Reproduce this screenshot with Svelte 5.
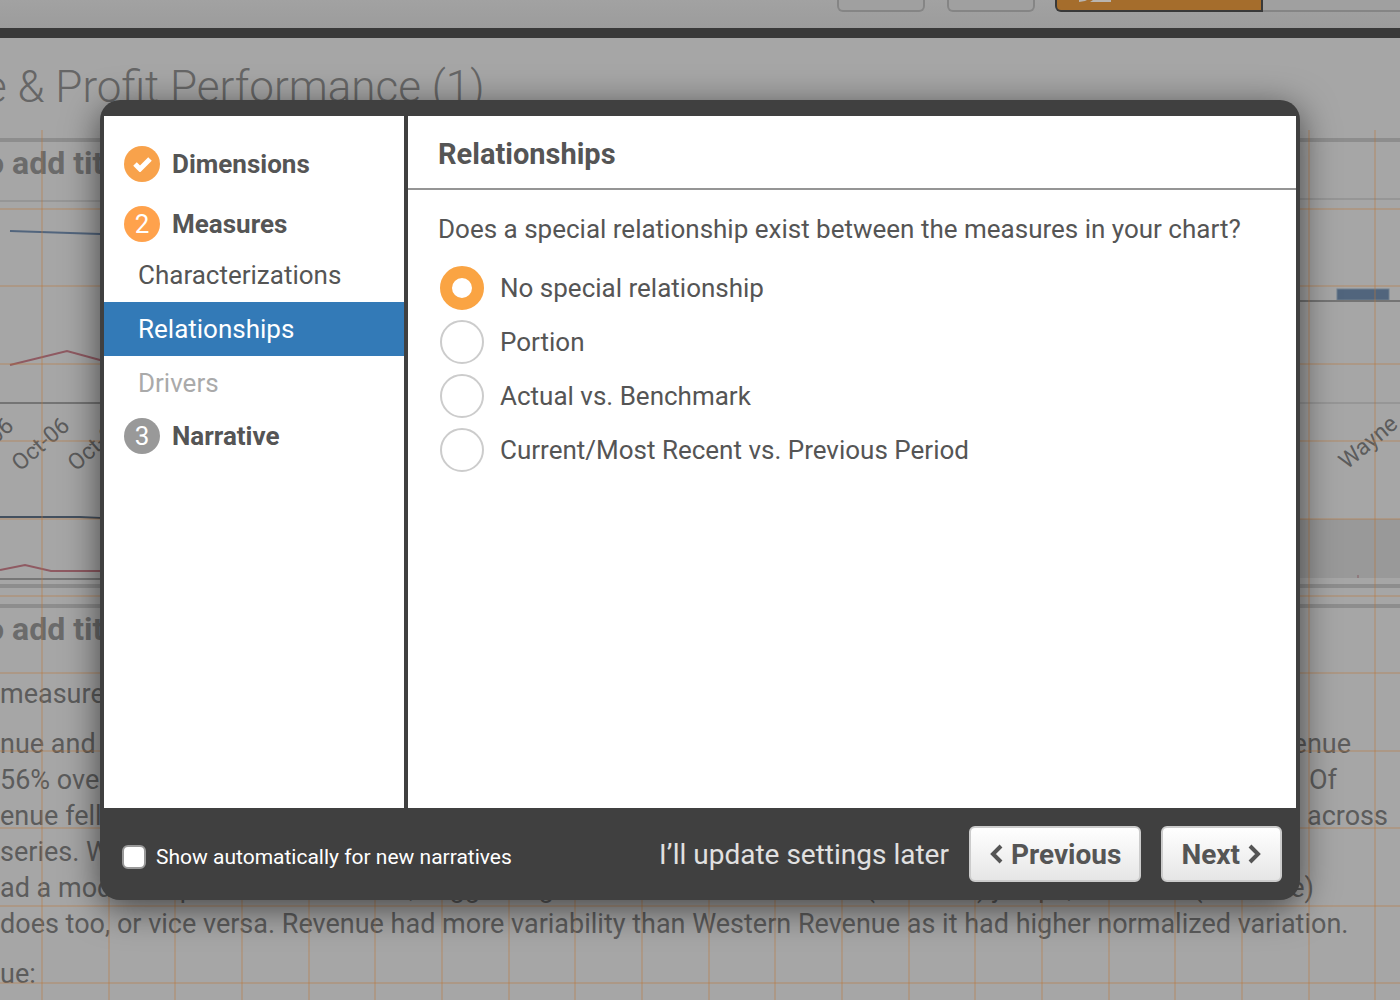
<script>
  const columns = Array.from({ length: 40 }, (_, i) => Math.round(41 + (i * 200) / 3));
  const rows = Array.from({ length: 24 }, (_, i) => Math.round(78 + (i * 387) / 5));

  const subSteps = [
    { name: 'Characterizations', state: '' },
    { name: 'Relationships', state: 'active' },
    { name: 'Drivers', state: 'disabled' }
  ];
  const options = [
    'No special relationship',
    'Portion',
    'Actual vs. Benchmark',
    'Current/Most Recent vs. Previous Period'
  ];
  let selected = $state('No special relationship');
  let showAuto = $state(false);
</script>

<div class="page">
  <header class="toolbar">
    <button class="tool" aria-label="Undo"></button>
    <button class="tool" aria-label="Redo"></button>
    <div class="modes">
      <button class="mode on" aria-label="Edit">
        <svg width="36" height="4" viewBox="0 0 36 4" aria-hidden="true">
          <path d="M2 0H10L8 1L2 2ZM16 0H34V2H13Z" fill="#b9b5b0" />
        </svg>
      </button>
      <button class="mode" aria-label="Sheets"></button>
    </div>
  </header>

  <main class="sheet">
    <h1>e &amp; Profit Performance (1)</h1>

    <section class="panel charts">
      <h2>o add title</h2>
      <div class="plots">
        <svg width="140" height="384" viewBox="0 0 140 384" aria-hidden="true">
          <g fill="none" stroke-width="2">
            <path d="M0 1H140" stroke="#969696" />
            <path d="M10 31L100 34L140 36" stroke="#52657d" />
            <path d="M10 165L67 151L100 160L140 170" stroke="#8f5a62" />
            <path d="M0 203H140" stroke="#747474" />
            <path d="M0 317H80L140 320" stroke="#43505f" />
            <path d="M0 370L25 365L51 371H140" stroke="#8f5a62" />
            <path d="M0 379H140" stroke="#777" />
          </g>
          <g class="ticks">
            <text transform="translate(-36 272) rotate(-41)">Oct-06</text>
            <text transform="translate(20 272) rotate(-41)">Oct-06</text>
            <text transform="translate(76 272) rotate(-41)">Oct-06</text>
          </g>
        </svg>
        <svg width="140" height="384" viewBox="0 0 140 384" aria-hidden="true">
          <rect x="0" y="319" width="140" height="59" fill="#999" />
          <rect x="77" y="89" width="52" height="11" fill="#51657d" stroke="#71808f" />
          <g fill="none" stroke-width="2">
            <path d="M0 -1H140" stroke="#969696" />
            <path d="M0 101H140" stroke="#747474" />
            <path d="M0 203H140" stroke="#969696" />
            <path d="M98 375V378" stroke="#8f7b7e" />
          </g>
          <g class="ticks">
            <text transform="translate(87 270) rotate(-40)">Wayne</text>
          </g>
        </svg>
      </div>
    </section>

    <section class="panel story">
      <h2>o add title</h2>
      <div class="lines">
        <p>measures</p>
        <div class="para">
          <p><span>nue and</span><span class="r1">enue</span></p>
          <p><span>56% over</span><span class="r2">Of</span></p>
          <p><span>enue fell</span><span class="r3">t across</span></p>
          <p><span>series. We</span></p>
          <p class="in"><span>ad a moderate positive correlation, suggesting that</span><span class="r5">if one (Revenue) jumps, the other (Revenue)</span></p>
          <p>does too, or vice versa. Revenue had more variability than Western Revenue as it had higher normalized variation.</p>
        </div>
        <p>ue:</p>
      </div>
    </section>
  </main>

  <svg class="grid" width="100%" height="100%" aria-hidden="true">
    {#each columns as x}
      <rect {x} y="0" width="2" height="100%" />
    {/each}
    {#each rows as y}
      <rect x="0" {y} width="100%" height="2" />
    {/each}
  </svg>
</div>

<div class="overlay">
  <div class="modal" role="dialog" aria-modal="true" aria-labelledby="dialog-title">
    <div class="body">
      <nav>
        <div class="step">
          <span class="badge">
            <svg width="20" height="16" viewBox="0 0 20 16" aria-hidden="true">
              <path d="M3 8L8 13L18 3" fill="none" stroke="#fff" stroke-width="5" />
            </svg>
          </span>
          <span>Dimensions</span>
        </div>
        <div class="step second"><span class="badge bright">2</span><span>Measures</span></div>
        <div class="subs">
          {#each subSteps as step}
            <button class="sub {step.state}" disabled={step.state === 'disabled'}>{step.name}</button>
          {/each}
        </div>
        <div class="step"><span class="badge grey">3</span><span>Narrative</span></div>
      </nav>
      <section class="content">
        <h3 id="dialog-title">Relationships</h3>
        <fieldset>
          <legend>Does a special relationship exist between the measures in your chart?</legend>
          {#each options as option}
            <label class="option">
              <input type="radio" name="relationship" value={option} bind:group={selected} />
              <span>{option}</span>
            </label>
          {/each}
        </fieldset>
      </section>
    </div>
    <footer>
      <label class="auto">
        <input type="checkbox" bind:checked={showAuto} />
        <span>Show automatically for new narratives</span>
      </label>
      <a href="#later">I’ll update settings later</a>
      <button class="nav">
        <svg width="14" height="22" viewBox="0 0 14 22" aria-hidden="true">
          <path d="M12 3L4 11L12 19" fill="none" stroke="#555" stroke-width="4" />
        </svg>
        Previous
      </button>
      <button class="nav">
        Next
        <svg width="14" height="22" viewBox="0 0 14 22" aria-hidden="true">
          <path d="M2 3L10 11L2 19" fill="none" stroke="#555" stroke-width="4" />
        </svg>
      </button>
    </footer>
  </div>
</div>

<style>
  :global(body) { background: #a6a6a6; }
  .page, .overlay { font-family: Roboto, "Liberation Sans", sans-serif; font-size: 26px; box-sizing: border-box; }
  h1, h2, h3, p { margin: 0; }
  button { font: inherit; cursor: pointer; }

  .page { position: relative; height: 100vh; min-height: 1000px; overflow: hidden; background: #a6a6a6; color: #5c5c5c; }
  .toolbar { display: flex; justify-content: flex-end; align-items: flex-start; height: 28px; background: linear-gradient(#a2a2a2, #9c9c9c); border-bottom: 10px solid #393939; }
  .tool { box-sizing: border-box; width: 88px; height: 12px; margin-right: 22px; padding: 0; background: #a0a0a0; border: 2px solid #858585; border-top: 0; border-radius: 0 0 6px 6px; }
  .tool + .tool { margin-right: 20px; }
  .modes { display: flex; }
  .mode { box-sizing: border-box; width: 137px; height: 12px; padding: 0; background: #a0a0a0; border: 0; border-bottom: 2px solid #858585; }
  .mode.on { display: flex; align-items: flex-start; width: 208px; padding-left: 20px; background: #a56d2c; border: 2px solid #393939; border-top: 0; border-radius: 0 0 0 6px; }

  h1 { height: 100px; box-sizing: border-box; padding-top: 20px; margin-left: -16px; font-size: 44px; line-height: 58px; font-weight: 300; color: #666; white-space: nowrap; }
  .sheet { color: #5c5c5c; }
  .panel { box-sizing: border-box; border-top: 4px solid #8d8d8d; }
  .charts { height: 450px; border-bottom: 4px solid #8d8d8d; margin-bottom: 16px; }
  h2 { height: 58px; font-size: 32px; line-height: 42px; color: #6b6b6b; margin-left: -14px; white-space: nowrap; }
  .plots { display: flex; justify-content: space-between; }
  .plots svg { display: block; overflow: visible; }
  .ticks { font-size: 23px; fill: #5c5c5c; }
  .lines { padding-top: 10px; font-size: 27px; line-height: 36px; white-space: nowrap; }
  .para { margin: 14px 0; }
  .para p { display: flex; justify-content: space-between; }
  .r1 { padding-right: 49px; }
  .r2 { padding-right: 63px; }
  .r3 { padding-right: 12px; }
  .r5 { padding-right: 86px; }
  .grid { position: absolute; left: 0; top: 130px; }
  .grid rect { fill: #b9783c; fill-opacity: 0.3; }

  .overlay { position: absolute; top: 0; left: 0; width: 100%; height: 100vh; min-height: 1000px; padding: 100px; display: flex; }
  .modal { flex: 1; min-width: 0; display: flex; flex-direction: column; box-sizing: border-box; padding-top: 16px; background: #404040; border-radius: 20px; box-shadow: 0 8px 36px rgba(0, 0, 0, 0.6); }
  .body { flex: 1; display: grid; grid-template-columns: 300px 1fr; gap: 4px; margin: 0 4px; color: #555; }
  nav, .content { background: #fff; }
  nav { padding-top: 30px; }
  .step { display: flex; align-items: center; gap: 12px; height: 36px; padding-left: 20px; line-height: 38px; font-weight: 700; }
  .second { margin: 24px 0 6px; }
  .badge { display: flex; align-items: center; justify-content: center; width: 36px; height: 36px; border-radius: 50%; background: #f8a24b; color: #fff; font-weight: 400; }
  .bright { background: #ffa24c; }
  .grey { background: #999; }
  .subs { margin-bottom: 8px; }
  .sub { display: block; width: 100%; height: 54px; padding: 0 34px; border: 0; background: none; text-align: left; color: #555; }
  .sub.active { background: #337ab7; color: #fff; }
  .sub.disabled { color: #aaa; }

  h3 { height: 72px; padding-left: 30px; font-size: 29px; line-height: 76px; border-bottom: 2px solid #959595; }
  fieldset { margin: 0; padding: 22px 30px; border: 0; min-width: 0; }
  legend { padding: 0; float: left; width: 100%; line-height: 34px; margin-bottom: 15px; }
  .option { clear: both; display: flex; align-items: center; gap: 16px; height: 54px; padding-left: 2px; }
  .option input { appearance: none; box-sizing: border-box; width: 44px; height: 44px; margin: 0; border: 2px solid #ccc; border-radius: 50%; background: #fff; }
  .option input:checked { border: 12px solid #faa443; }

  footer { display: flex; align-items: center; gap: 20px; height: 92px; padding: 0 18px 0 22px; color: #fff; }
  .auto { display: flex; align-items: center; gap: 10px; margin: 6px auto 0 0; font-size: 21px; }
  .auto input { appearance: none; box-sizing: border-box; width: 24px; height: 24px; margin: 0; border: 2px solid #999; border-radius: 6px; background: #fff; }
  .auto input:checked { background: #faa443; }
  footer a { color: #e0e0e0; font-size: 28px; text-decoration: none; }
  .nav { display: flex; align-items: center; justify-content: center; gap: 8px; box-sizing: border-box; height: 56px; padding: 0 18px; border: 2px solid #ccc; border-radius: 6px; background: linear-gradient(#fff, #e6e6e6); color: #555; font-size: 28px; font-weight: 700; }
</style>
